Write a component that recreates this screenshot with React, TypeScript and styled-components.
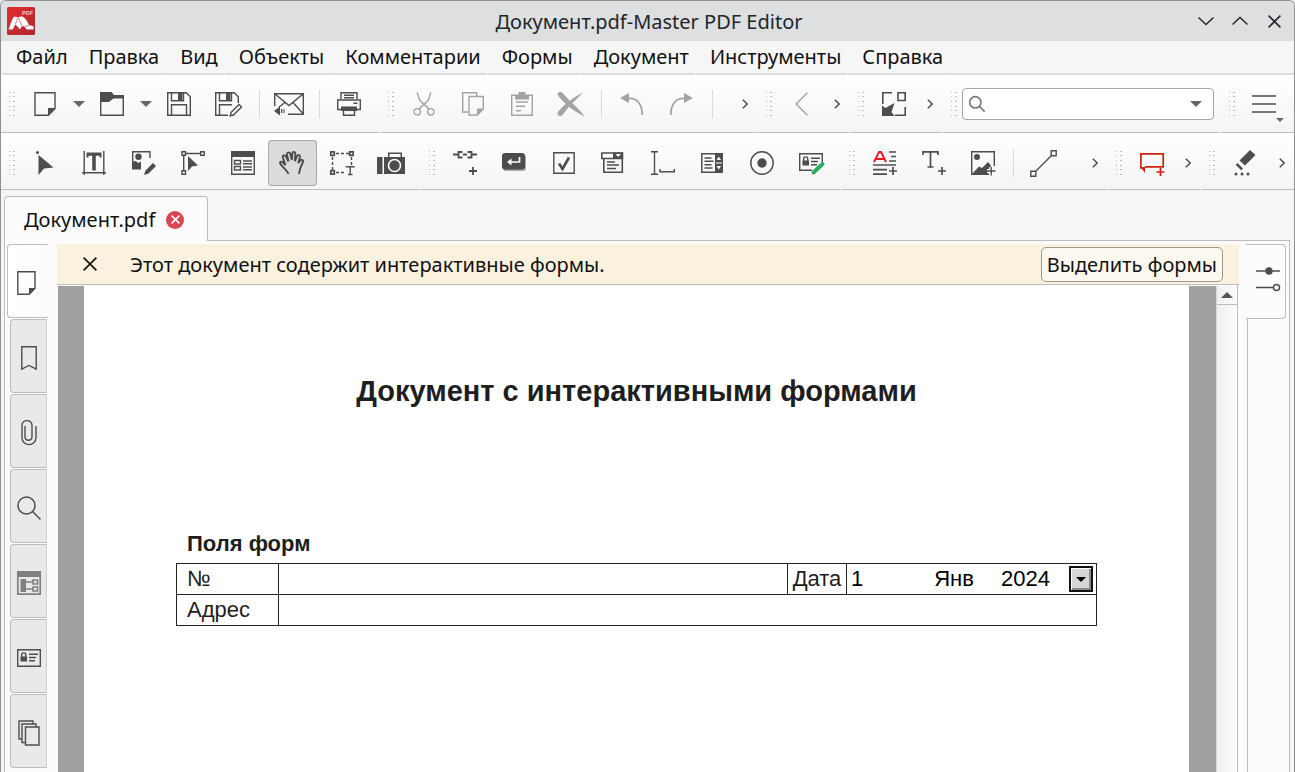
import React from "react";
import styled, { createGlobalStyle, css } from "styled-components";

const ink = "#4d4d4d";
const line = "#bdbdbd";
const ui = `"Noto Sans", "Liberation Sans", sans-serif`;
const doc = `"Liberation Sans", Arial, sans-serif`;

const Global = createGlobalStyle`
  * { box-sizing: border-box; }
  html, body, #root { height: 100%; }
  body { margin: 0; background: #ececec; font-family: ${ui}; font-size: 20px; color: #111; overflow: hidden; }
  button, input { font: inherit; color: inherit; margin: 0; }
  button { border: 0; background: none; padding: 0; }
  svg { display: block; flex: none; overflow: visible; }
`;

const Window = styled.div`
  height: 100%;
  display: flex;
  flex-direction: column;
  border: 1px solid #8e9091;
  border-bottom: 0;
  border-radius: 6px 6px 0 0;
  background: #f6f6f6;
  overflow: hidden;
`;

const TitleBar = styled.header`
  flex: none;
  height: 40px;
  display: grid;
  grid-template-columns: 1fr auto 1fr;
  align-items: center;
  background: #dedfe1;
  padding: 0 3px 0 6px;
`;

const Title = styled.h1`
  margin: 0;
  padding-top: 2px;
  font-size: 20px;
  font-weight: 400;
  line-height: 26px;
  color: #232629;
`;

const WindowButtons = styled.div`
  display: flex;
  justify-content: flex-end;
`;

const WindowButton = styled.button`
  width: 34px;
  height: 34px;
  display: grid;
  place-items: center;
  color: #232629;
`;

const MenuBar = styled.nav`
  flex: none;
  display: flex;
  height: 34px;
  padding-left: 1px;
  gap: 1px;
`;

const MenuItem = styled.button`
  padding: 0 6px 0 14px;
  line-height: 32px;
  border-bottom: 2px solid #dcdcdc;
`;

const MenuRest = styled.span`
  flex: 1;
  border-bottom: 2px solid #dcdcdc;
`;

const ToolRow = styled.div<{ $height: number }>`
  flex: none;
  display: flex;
  gap: 1px;
  height: ${(p) => p.$height}px;
  background: linear-gradient(#ffffff, #f4f4f4);
`;

const ToolGroup = styled.div<{ $width?: number; $end?: number; $top?: number }>`
  flex: ${(p) => (p.$width ? `0 0 ${p.$width}px` : "1 1 0")};
  min-width: 0;
  display: flex;
  align-items: center;
  padding-top: ${(p) => p.$top ?? 0}px;
  padding-right: ${(p) => p.$end ?? 0}px;
  border-bottom: 1px solid ${line};
`;

const Tool = styled.button<{ $active?: boolean; $muted?: boolean }>`
  position: relative;
  flex: 1 1 0;
  height: 46px;
  display: grid;
  place-items: center;
  border-radius: 4px;
  color: ${(p) => (p.$muted ? "#a3a3a3" : ink)};
  ${(p) =>
    p.$active &&
    css`
      background: #dcdcdc;
      box-shadow: inset 0 0 0 1px #a9a9a9;
    `}
`;

const Narrow = styled.button<{ $width: number }>`
  flex: 0 0 ${(p) => p.$width}px;
  height: 46px;
  display: grid;
  place-items: center;
  color: ${ink};
`;

const Divider = styled.span<{ $width: number }>`
  flex: 0 0 ${(p) => p.$width}px;
  height: 28px;
  background: linear-gradient(#d9d9d9, #d9d9d9) center / 1px 100% no-repeat;
`;

const Spacer = styled.span`
  flex: 0 0 15px;
`;

const GripBox = styled.span`
  flex: 0 0 19px;
  padding-left: 7px;
`;

const MenuMark = styled.span`
  position: absolute;
  right: 3px;
  bottom: 5px;
`;

const SearchBox = styled.label`
  flex: 1;
  min-width: 0;
  height: 32px;
  display: flex;
  align-items: center;
  gap: 6px;
  padding: 0 11px 0 6px;
  border: 1px solid #a8a8a8;
  border-radius: 4px;
  background: #fff;
  color: #777;
`;

const SearchInput = styled.input`
  flex: 1;
  min-width: 0;
  border: 0;
  outline: 0;
  background: none;
`;

const TabStrip = styled.div`
  flex: none;
  height: 51px;
  padding: 6px 0 0 3px;
  display: flex;
`;

const DocTab = styled.div`
  display: flex;
  align-items: center;
  gap: 11px;
  height: 45px;
  padding: 1px 23px 0 19px;
  border: 1px solid ${line};
  border-bottom: 0;
  border-radius: 4px 4px 0 0;
  background: #fcfcfc;
`;

const TabRest = styled.span`
  flex: 1;
  margin-right: 4px;
  border-bottom: 1px solid ${line};
`;

const CloseTab = styled.button`
  width: 18px;
  height: 18px;
  display: grid;
  place-items: center;
  border-radius: 50%;
  background: #da4453;
  color: #fff;
`;

const Pane = styled.div`
  flex: 1;
  min-height: 0;
  margin: 0 4px 0 3px;
  padding: 3px 3px 0 2px;
  display: flex;
  border: solid ${line};
  border-width: 0 1px;
  background: #fcfcfc;
`;

const SideTabs = styled.nav`
  flex: 0 0 41px;
  display: flex;
  flex-direction: column;
  gap: 1px;
`;

const SideTab = styled.button<{ $current?: boolean }>`
  flex: 0 0 74px;
  display: grid;
  place-items: center;
  padding-top: 4px;
  border: 1px solid ${line};
  border-radius: 4px 0 0 4px;
  color: ${ink};
  ${(p) =>
    p.$current
      ? css`
          padding-right: 3px;
          border-right: 0;
          background: linear-gradient(90deg, #ffffff, #fcfcfc);
        `
      : css`
          margin: 0 1px 0 3px;
          border-right-color: #cfcfcf;
          background: #e9e9e9;
        `}
`;

const Center = styled.main`
  flex: 1;
  min-width: 0;
  margin-left: 9px;
  display: flex;
  flex-direction: column;
`;

const Notice = styled.div`
  flex: none;
  height: 41px;
  display: flex;
  align-items: center;
  padding: 0 16px 0 26px;
  background: #faf2df;
  border-bottom: 1px solid ${line};
`;

const NoticeClose = styled.button`
  color: #111;
`;

const NoticeText = styled.p`
  flex: 1;
  margin: 0 0 0 33px;
`;

const NoticeAction = styled.button`
  height: 35px;
  padding: 0 5px;
  border: 1px solid #9c9890;
  border-radius: 5px;
  background: #fdf9f0;
  line-height: 33px;
`;

const Viewer = styled.div`
  flex: 1;
  min-height: 0;
  margin: 0 1px;
  padding-top: 1px;
  display: flex;
  border-right: 1px solid ${line};
`;

const Desk = styled.div`
  flex: 1;
  min-width: 0;
  padding: 0 27px 0 26px;
  background: #a0a0a0;
  display: flex;
  overflow: hidden;
`;

const Sheet = styled.article`
  flex: 1;
  padding: 88px 92px 0;
  background: #fff;
  font-family: ${doc};
  color: #1e1e1e;
`;

const SheetTitle = styled.h2`
  margin: 0;
  font-size: 29px;
  line-height: 34px;
  text-align: center;
`;

const SheetSection = styled.h3`
  margin: 123px 0 0 11px;
  font-size: 22px;
  line-height: 26px;
`;

const FormTable = styled.table`
  width: 100%;
  margin-top: 6px;
  border-collapse: collapse;
  table-layout: fixed;
  font-size: 22px;
  line-height: 28px;
  color: #1e1e1e;
`;

const Cell = styled.td<{ $label?: boolean }>`
  height: 31px;
  padding: 0 0 0 ${(p) => (p.$label ? 10 : 0)}px;
  border: 1px solid #222;
`;

const DateLabelCell = styled.td`
  padding: 0;
  border: 1px solid #222;
  text-align: center;
`;

const Field = styled.input`
  display: block;
  width: 100%;
  height: 28px;
  padding: 0 5px;
  border: 0;
  outline: 0;
  background: none;
`;

const DateField = styled.div`
  display: flex;
  align-items: center;
  height: 30px;
  padding-right: 3px;
  color: #000;
`;

const DatePart = styled.input<{ $width: number; $align?: string }>`
  flex: 0 0 ${(p) => p.$width}px;
  width: ${(p) => p.$width}px;
  padding: 0 4px;
  border: 0;
  outline: 0;
  background: none;
  text-align: ${(p) => p.$align ?? "left"};
`;

const DateOpen = styled.button`
  margin-left: auto;
  width: 24px;
  height: 26px;
  display: grid;
  place-items: center;
  border: 2px solid #111;
  background: #d6d6d6;
  box-shadow: inset 1px 1px 0 #fff, inset -2px -2px 0 #8a8a8a;
  color: #000;
`;

const ScrollBar = styled.div`
  flex: 0 0 21px;
  background: linear-gradient(90deg, #f0f0f0, #fcfcfc);
  border-left: 1px solid #d8d8d8;
`;

const ScrollUp = styled.button`
  width: 100%;
  height: 19px;
  display: grid;
  place-items: center;
  border-bottom: 1px solid ${line};
  color: ${ink};
`;

const RightDock = styled.aside`
  flex: 0 0 40px;
  margin-left: 7px;
  display: flex;
  flex-direction: column;
`;

const RightTab = styled.button`
  flex: 0 0 75px;
  display: grid;
  place-items: center;
  padding: 0 0 6px 5px;
  border: 1px solid ${line};
  border-left: 0;
  border-radius: 0 4px 4px 0;
  color: ${ink};
`;

const RightBody = styled.div`
  flex: 1;
  border-left: 1px solid ${line};
  margin-left: 1px;
`;

type IconProps = { w?: number; h?: number; sw?: number; children: React.ReactNode };

const Icon = ({ w = 24, h = 24, sw = 1.4, children }: IconProps) => (
  <svg width={w} height={h} viewBox={`0 0 ${w} ${h}`} fill="none" stroke="currentColor" strokeWidth={sw} aria-hidden="true">
    {children}
  </svg>
);

const solid = { fill: "currentColor", stroke: "none" };

const Grip = () => (
  <GripBox>
    <svg width="8" height="26" viewBox="0 0 8 26" fill="#bdbdbd" aria-hidden="true">
      {[0, 4, 9, 14, 18, 23].map((y) => (
        <React.Fragment key={y}>
          <rect x="1" y={y + 1} width="1" height="1" />
          <rect x="5" y={y + 1} width="2" height="1" />
        </React.Fragment>
      ))}
    </svg>
  </GripBox>
);

const DownTriangle = ({ w = 12, h = 6 }) => (
  <svg width={w} height={h} viewBox={`0 0 ${w} ${h}`} fill="#666" aria-hidden="true">
    <path d={`M0 0h${w}L${w / 2} ${h}z`} />
  </svg>
);

const DropDown = ({ label }: { label: string }) => (
  <Narrow $width={17} aria-label={label}>
    <DownTriangle />
  </Narrow>
);

const More = () => (
  <Narrow $width={24} aria-label="Ещё">
    <Icon w={6} h={10} sw={1.5}>
      <path d="M.8.7 5.2 5 .8 9.3" />
    </Icon>
  </Narrow>
);

const NewIcon = () => (
  <Icon>
    <path d="M2 .7h20v16l-6.600 6.600H2z" />
    <path {...solid} d="M22 16h-7v7.500z" />
  </Icon>
);
const OpenIcon = () => (
  <Icon>
    <path {...solid} d="M0 0h11.500l2.500 3h10v3.500H13.500L9 10H0z" />
    <path d="M.7 9v14.300h22.600V5" />
  </Icon>
);
const SaveIcon = () => (
  <Icon>
    <path d="M.7.7h18.500l4.100 4.100v18.500H.7zM4.500.7v8h12v-8M4.500 23.300V12.700h15v10.600" />
    <path {...solid} d="M11 1h4.500v7H11z" />
  </Icon>
);
const SaveAsIcon = () => (
  <Icon w={28}>
    <path d="M13 23.300H.7V.7h18.500l4.100 4.100V11M4.500.7v8h12v-8M4.500 23V12.700H17" />
    <path {...solid} d="M11 1h4.500v7H11z" />
    <path d="m16 20.500 8-8 2.500 2.500-8 8-3.300.8z" />
  </Icon>
);
const MailIcon = () => (
  <Icon w={30}>
    <path d="M.7 14V1.700h28.600v20.600H14M.7 1.700 15 13.500 29.300 1.700M11 10.500 5 15M19 10.500l10 11" />
    <path {...solid} d="m0 19 6-4.500v9zM7 17h1.300v4H7zM9.500 17h1v4h-1z" />
  </Icon>
);
const PrintIcon = () => (
  <Icon>
    <path d="M4 7V.8h16V7M7 3.200h10M7 5.700h10M4 17.500H.7V8h22.600v9.500H20M6.500 19v4.300h11V19" />
    <path {...solid} d="M4 14.500h16V19H4zM16.500 10.500h4v1.500h-4z" />
  </Icon>
);
const CutIcon = () => (
  <Icon w={22}>
    <path d="M4 .5 7 8.500l9 8.500M18 .5l-3 8L6 17" />
    <circle cx="4.200" cy="19.800" r="3.200" />
    <circle cx="17.800" cy="19.800" r="3.200" />
  </Icon>
);
const CopyIcon = () => (
  <Icon w={22}>
    <path d="M6 20H.7V.7h14V4M7 4.500h14.300v12.500l-6 6H7z" />
    <path {...solid} d="M21.500 16.500H15v7z" />
  </Icon>
);
const PasteIcon = () => (
  <Icon w={22}>
    <path d="M4.500 3.200H.7v20.100h20.600V3.200h-3.800M5 10h12M5 14.200h9M5 18.700h5" />
    <path {...solid} d="M4 2.500h3.500V0h7v2.500H18V7.500H4z" />
  </Icon>
);
const DeleteIcon = () => (
  <Icon w={28}>
    <path {...solid} d="M.5 2.500C.5-.3 4-.7 6 1.500c3.500 4 9.500 10 16 16l6 7.200C19 20.500 7 12.500.5 2.500zM26.500.3C19 7.500 11 15 6 22.500c-2.200 2.800-6 1.500-5.500-1.700C4 15.500 14 6.500 26.500.3z" />
  </Icon>
);
const UndoIcon = ({ flip }: { flip?: boolean }) => (
  <Icon w={24} h={22} sw={1.800}>
    <g transform={flip ? "matrix(-1 0 0 1 24 0)" : undefined}>
      <path d="M8 5.500c9-.5 14 5 14.300 16.500" />
      <path {...solid} d="M0 5 9 0v10z" />
    </g>
  </Icon>
);
const BackIcon = () => (
  <Icon w={13}>
    <path d="M12.500.7 1.200 12l11.300 11.300" />
  </Icon>
);
const FitIcon = () => (
  <Icon sw={1.600}>
    <path d="M.8 12V.8H10M23.200 15v8.200H13M16 .8h7.200V8.500H16z" />
    <path {...solid} d="M0 13.500 3.500 16 12.500 11 9.500 20l3 4H0z" />
  </Icon>
);
const SearchIcon = ({ size = 16 }) => (
  <svg width={size} height={size} viewBox="0 0 24 24" fill="none" stroke="currentColor" strokeWidth={size > 20 ? 1.500 : 2.400} aria-hidden="true">
    <circle cx="9.500" cy="9.500" r="8.500" />
    <path d="m15.500 15.500 8 8" />
  </svg>
);
const BurgerIcon = () => (
  <Icon h={18} sw={1.600}>
    <path d="M0 1h24M0 9h24M0 17h24" />
  </Icon>
);

const SelectIcon = () => (
  <Icon w={22}>
    <circle {...solid} cx="3.500" cy="1.500" r="1.500" />
    <path {...solid} d="M4.500 4v20l5.500-6.500 9.500-1z" />
  </Icon>
);
const TextIcon = () => (
  <Icon w={24}>
    <path d="M2.200 0v24M21.800 0v24M0 21.800h24" />
    <path {...solid} d="M4.500 1.500h15v5h-2V4.800h-3.700V19.500h-3.600V4.800H6.500v1.700h-2z" />
  </Icon>
);
const EditImageIcon = () => (
  <Icon>
    <path d="M18 7V.7H.7V17" />
    <circle {...solid} cx="6.500" cy="5.800" r="3.200" />
    <path {...solid} d="M0 12c3-3 4-2 6 0l3-1.500v8H0zM21 12l3 3-7.500 7.500-4.500 1.500 1.500-4.500z" />
  </Icon>
);
const EditPathIcon = () => (
  <Icon>
    <path d="M1 .8h3.500v3.500H1zM19.700.8h3.500v3.500h-3.500zM1 19.700h3.500v3.500H1zM4.500 2.500h15M2.700 4.500v15" />
    <path {...solid} d="M7 5v15l4-4.500 6-1z" />
  </Icon>
);
const FormIcon = () => (
  <Icon>
    <path d="M.7.7h22.600v22.600H.7zM3.500 9.500h6v3.500h-6zM3.500 15.500h6V19h-6zM12 10h9M12 12.700h9M12 16h9M12 18.700h9" />
    <path {...solid} d="M0 0h24v6H0z" />
  </Icon>
);
const HandIcon = () => (
  <Icon w={26} h={24} sw={1.900}>
    <path d="M9.500 23C8 19 3.500 16.500 1.300 12.800.3 11 2.500 9.800 4 11.500L6.500 14 3.800 6.500C3.200 4.500 6 3.500 7 5.500l2.500 5L8 3.500C7.600 1.500 10.500.6 11.300 2.600L12.800 9l.6-6.600c.3-2 3-1.800 3 .3L15.800 10l2.400-5c.9-1.800 3.300-1 2.800 1l-1.800 6 2.300-2.600c1.400-1.400 3.300 0 2.500 1.600C22.500 14 21 16 20 23" />
  </Icon>
);
const SelectTextIcon = () => (
  <Icon>
    <path d="M.8.8h3.500v3.500H.8zM19.700.8h3.500v3.500h-3.500zM.8 19.700h3.500v3.500H.8z" strokeWidth="1.700" />
    <path strokeDasharray="3 2" d="M6 2.500h13M2.500 6v13M21.500 6v8M6 21.500h9" />
    <path d="M16.500 16.500V15.700H24v.8M20.200 16v7.500M18 23.500h4.500" />
  </Icon>
);
const CameraIcon = () => (
  <Icon w={28} h={22}>
    <path {...solid} d="M0 5h5.500v17H0zM7 5h4V.5h14V5h3v17H7zM12.500 2v3h11V2z" fillRule="evenodd" />
    <circle cx="17.500" cy="13.500" r="6" stroke="#fff" strokeWidth="1.600" />
  </Icon>
);
const LinkIcon = () => (
  <Icon sw={1.800}>
    <path d="M0 3.500h5M19 3.500h5M9.500 1H5.500v5.500h4M14.500 1h4v5.500h-4M10 3.500h4M16 20h8M20 16v8" />
  </Icon>
);
const EnterIcon = () => (
  <Icon h={20}>
    <rect x="1" y="1.500" width="23" height="16.500" rx="3" fill="#a8a8a8" stroke="none" />
    <rect width="23" height="16.500" rx="3" {...solid} />
    <path d="M17.500 4v5H7" stroke="#fff" strokeWidth="1.700" />
    <path d="m5 9 4.500-3.500v7z" fill="#fff" stroke="none" />
  </Icon>
);
const CheckIcon = () => (
  <Icon w={22} h={22}>
    <path d="M.8.8h20.400v20.400H.8z" />
    <path d="m6 11.500 3.500 5.500L16 5.500" strokeWidth="2.600" />
  </Icon>
);
const ComboIcon = () => (
  <Icon h={22}>
    <path d="M2.800 6.500v13.700h18.500V6.500M.8 1h20.700v5.500H.8zM6 10h8M6 13h12M6 16.500h9" strokeWidth="1.600" />
    <path {...solid} d="M12 .5h10v6.300H12z" />
    <path d="m14.500 2 2.700 3 2.700-3z" fill="#fff" stroke="none" />
  </Icon>
);
const InputIcon = () => (
  <Icon>
    <path d="M0 .8h7M3.500.8v22.400M0 23.200h7M9 18v2.800h14.300V18" />
  </Icon>
);
const ListIcon = () => (
  <Icon w={22} h={20} sw={1.500}>
    <path d="M.8.8h20.400v18.400H.8zM3.500 5h7M3.500 8.300h9M3.500 11.700h7M3.500 15h8" />
    <path {...solid} d="M14 .5h7.500v19H14z" />
    <path d="M15.500 7h4.500l-2.200-3.500zM15.500 13h4.500l-2.200 3.500zM15 9.500h6v1h-6z" fill="#fff" stroke="none" />
  </Icon>
);
const RadioIcon = () => (
  <Icon>
    <circle cx="12" cy="12" r="11.200" />
    <circle {...solid} cx="12" cy="12" r="4.700" />
  </Icon>
);
const SignIcon = ({ pen }: { pen?: boolean }) => (
  <Icon h={pen ? 20 : 18} w={24}>
    <path d={pen ? "M13 17.200H.7V.7h22.600V10" : "M.7.7h22.600v16.600H.7z"} />
    <path {...solid} d="M3.500 7.500H10v5H3.500z" />
    <path d="M4.700 8V5.500c0-2.200 4-2.200 4 0V8M12 5.200h9M12 8.500h7M12 11.800h6" />
    {pen && <path d="m14.500 19.500 9-8.500" stroke="#27ae60" strokeWidth="4" strokeLinecap="round" />}
  </Icon>
);
const EditTextIcon = () => (
  <Icon sw={1.700}>
    <path d="m1 11 5-10h2l5 10M3 8h8" stroke="#f0141e" strokeWidth="1.800" />
    <path d="M16 1h7M18 5.500h5M16 10h7M0 14h23M0 18.700h14M0 23.200h14M16 20h8M20 16v8" />
  </Icon>
);
const AddTextIcon = () => (
  <Icon sw={1.700}>
    <path d="M1 4V.9h15V4M8.500 1v15M5.500 16h6M16 20h8M20 16v8" />
  </Icon>
);
const AddImageIcon = () => (
  <Icon>
    <path d="M18 23.300H.7V.7h22.600V15" />
    <circle {...solid} cx="6" cy="6" r="3" />
    <path {...solid} d="m1 23 7-7.500 3 1.500 6-6 3 3.500-3 8.500z" />
    <path d="M16 20h8.500M20.200 16v8.500" stroke="#fbfbfb" strokeWidth="4" />
    <path d="M16 20h8.500M20.200 16v8.500" />
  </Icon>
);
const LineIcon = () => (
  <Icon w={27} h={27}>
    <path d="M.8 21.200h5v5h-5zM21.200.8h5v5h-5zM5.500 21.500l16-16" />
  </Icon>
);
const NoteIcon = () => (
  <Icon w={23} h={22} sw={1.700}>
    <g stroke="#d0210f">
      <path d="M2 16H.9V1.800h22.300v13H5" />
      <path d="M.5 15h4.500v6z" fill="#d0210f" stroke="none" />
      <path d="M16.500 20h8M20.500 16v8" />
    </g>
  </Icon>
);
const MarkerIcon = () => (
  <Icon w={22} h={26}>
    <path {...solid} d="M16 0l5.500 5L11 15.500 5.500 10.500zM3.500 13l5.500 5.500-1.800 1.800-5.500-5.500z" />
    <circle {...solid} cx="2" cy="24" r="1.500" />
    <circle {...solid} cx="8" cy="24" r="1.500" />
    <circle {...solid} cx="14" cy="24" r="1.500" />
  </Icon>
);
const BookmarkIcon = () => (
  <Icon w={16}>
    <path d="M.8.8h14.400v22.400L8 19.500.8 23.200z" />
  </Icon>
);
const PageIcon = () => (
  <Icon w={19}>
    <path d="M.8.8h17.200v16.500l-6 6H.8z" />
    <path {...solid} d="M18.500 17H12v6.500h1z" />
  </Icon>
);
const ClipIcon = () => (
  <Icon w={16} h={26}>
    <path d="M4 6v10.500c0 5 7 5 7 0V5.500c0-6.500-10-6.500-10 0v12c0 9.500 14 9.500 14 0V6" />
  </Icon>
);
const StructureIcon = () => (
  <Icon>
    <g stroke="#808080">
      <path d="M.8.8h22.400v22.400H.8zM16 9h4.500v4H16zM16 16h4.500v4H16zM9 11h7M9 18h7" strokeWidth="1.700" />
      <path fill="#808080" stroke="none" d="M0 0h24v6H0zM3.500 8H9v13H3.500z" />
    </g>
  </Icon>
);
const LayersIcon = () => (
  <Icon w={22} h={26}>
    <path d="M4 19H1V1h14v3M7 22.500H4V4h14v3M7.500 7H21v18H7.500z" />
  </Icon>
);
const SlidersIcon = () => (
  <Icon h={24} sw={1.500}>
    <path d="M0 4h24M0 20.500h17" />
    <circle {...solid} cx="13" cy="4" r="3.700" />
    <circle cx="20.500" cy="20.500" r="3" />
  </Icon>
);
const Cross = ({ size }: { size: number }) => (
  <Icon w={size} h={size} sw={1.600}>
    <path d={`M.6.6 ${size - 0.6} ${size - 0.6}M${size - 0.6} .6.6 ${size - 0.6}`} />
  </Icon>
);

const Logo = () => (
  <svg width="28" height="28" viewBox="0 0 28 28" role="img" aria-label="Master PDF Editor">
    <defs>
      <linearGradient id="logo" x1="0" y1="0" x2="1" y2="1">
        <stop offset="0" stopColor="#ea2a2c" />
        <stop offset="1" stopColor="#a92a31" />
      </linearGradient>
    </defs>
    <rect width="28" height="28" rx="1.500" fill="url(#logo)" />
    <text x="15" y="7.500" fontFamily={doc} fontWeight="700" fontSize="5.500" fill="#f6c9c9">PDF</text>
    <path fill="#fff" d="M1.500 22.500C3 18.500 4.500 13 7 9.500l4 .7 4-.9c3 1.700 5.500 4.700 7 8.700l4.500 1.200v3.300h-7l-2.500-3.500-2.500.8-1.500 2.700-4.500-5L7.500 19l-1.700 3.500z" />
    <path stroke="#cf2a2e" strokeWidth=".6" fill="none" d="m11.500 10.500 3.500 9M22.500 18l-4.500 1.500M11 10.500 8.500 17" />
  </svg>
);

const menus = ["Файл", "Правка", "Вид", "Объекты", "Комментарии", "Формы", "Документ", "Инструменты", "Справка"];

export default function App() {
  return (
    <>
      <Global />
      <Window>
        <TitleBar>
          <Logo />
          <Title>Документ.pdf-Master PDF Editor</Title>
          <WindowButtons>
            <WindowButton aria-label="Свернуть">
              <Icon w={16} h={8}><path d="M.5.5 8 7.500 15.500.5" /></Icon>
            </WindowButton>
            <WindowButton aria-label="Развернуть">
              <Icon w={16} h={8}><path d="M.5 7.500 8 .5l7.500 7" /></Icon>
            </WindowButton>
            <WindowButton aria-label="Закрыть"><Cross size={13} /></WindowButton>
          </WindowButtons>
        </TitleBar>

        <MenuBar>
          {menus.map((name) => <MenuItem key={name}>{name}</MenuItem>)}
          <MenuRest />
        </MenuBar>

        <ToolRow $height={58}>
          <ToolGroup $width={378} $end={5}>
            <Grip />
            <Tool aria-label="Создать"><NewIcon /></Tool>
            <DropDown label="Варианты создания" />
            <Tool aria-label="Открыть"><OpenIcon /></Tool>
            <DropDown label="Недавние файлы" />
            <Tool aria-label="Сохранить"><SaveIcon /></Tool>
            <Tool aria-label="Сохранить как"><SaveAsIcon /></Tool>
            <Divider $width={10} />
            <Tool aria-label="Отправить"><MailIcon /></Tool>
            <Divider $width={10} />
            <Tool aria-label="Печать"><PrintIcon /></Tool>
          </ToolGroup>
          <ToolGroup $width={377}>
            <Grip />
            <Tool $muted aria-label="Вырезать"><CutIcon /></Tool>
            <Tool $muted aria-label="Копировать"><CopyIcon /></Tool>
            <Tool $muted aria-label="Вставить"><PasteIcon /></Tool>
            <Tool $muted aria-label="Удалить"><DeleteIcon /></Tool>
            <Divider $width={12} />
            <Tool $muted aria-label="Отменить"><UndoIcon /></Tool>
            <Tool $muted aria-label="Повторить"><UndoIcon flip /></Tool>
            <Divider $width={12} />
            <Spacer />
            <More />
          </ToolGroup>
          <ToolGroup $width={91}>
            <Grip />
            <Tool $muted aria-label="Назад"><BackIcon /></Tool>
            <More />
          </ToolGroup>
          <ToolGroup $width={92}>
            <Grip />
            <Tool aria-label="По размеру"><FitIcon /></Tool>
            <More />
          </ToolGroup>
          <ToolGroup $end={6}>
            <Grip />
            <SearchBox>
              <SearchIcon />
              <SearchInput type="text" aria-label="Поиск" />
              <DownTriangle />
            </SearchBox>
          </ToolGroup>
          <ToolGroup $width={73} $end={7}>
            <Grip />
            <Tool aria-label="Меню">
              <BurgerIcon />
              <MenuMark><DownTriangle w={8} h={4} /></MenuMark>
            </Tool>
          </ToolGroup>
        </ToolRow>

        <ToolRow $height={57}>
          <ToolGroup $width={419} $end={4} $top={4}>
            <Grip />
            <Tool aria-label="Выделение"><SelectIcon /></Tool>
            <Tool aria-label="Правка текста"><TextIcon /></Tool>
            <Tool aria-label="Правка изображений"><EditImageIcon /></Tool>
            <Tool aria-label="Правка контуров"><EditPathIcon /></Tool>
            <Tool aria-label="Правка форм"><FormIcon /></Tool>
            <Tool $active aria-label="Рука" aria-pressed="true"><HandIcon /></Tool>
            <Tool aria-label="Выделить текст"><SelectTextIcon /></Tool>
            <Tool aria-label="Снимок"><CameraIcon /></Tool>
          </ToolGroup>
          <ToolGroup $width={419} $end={4} $top={4}>
            <Grip />
            <Tool aria-label="Ссылка"><LinkIcon /></Tool>
            <Tool aria-label="Кнопка"><EnterIcon /></Tool>
            <Tool aria-label="Флажок"><CheckIcon /></Tool>
            <Tool aria-label="Выпадающий список"><ComboIcon /></Tool>
            <Tool aria-label="Текстовое поле"><InputIcon /></Tool>
            <Tool aria-label="Список"><ListIcon /></Tool>
            <Tool aria-label="Переключатель"><RadioIcon /></Tool>
            <Tool aria-label="Подпись"><SignIcon pen /></Tool>
          </ToolGroup>
          <ToolGroup $width={266} $top={4}>
            <Grip />
            <Tool aria-label="Изменить текст"><EditTextIcon /></Tool>
            <Tool aria-label="Добавить текст"><AddTextIcon /></Tool>
            <Tool aria-label="Добавить изображение"><AddImageIcon /></Tool>
            <Divider $width={12} />
            <Tool aria-label="Линия"><LineIcon /></Tool>
            <Spacer />
            <More />
          </ToolGroup>
          <ToolGroup $width={92} $top={4}>
            <Grip />
            <Tool aria-label="Заметка"><NoteIcon /></Tool>
            <More />
          </ToolGroup>
          <ToolGroup $top={4}>
            <Grip />
            <Tool aria-label="Маркер"><MarkerIcon /></Tool>
            <More />
          </ToolGroup>
        </ToolRow>

        <TabStrip>
          <DocTab>
            Документ.pdf
            <CloseTab aria-label="Закрыть вкладку"><Cross size={9} /></CloseTab>
          </DocTab>
          <TabRest />
        </TabStrip>

        <Pane>
          <SideTabs>
            <SideTab $current aria-label="Страницы"><PageIcon /></SideTab>
            <SideTab aria-label="Закладки"><BookmarkIcon /></SideTab>
            <SideTab aria-label="Вложения"><ClipIcon /></SideTab>
            <SideTab aria-label="Поиск"><SearchIcon size={24} /></SideTab>
            <SideTab aria-label="Поля форм"><StructureIcon /></SideTab>
            <SideTab aria-label="Подписи"><SignIcon /></SideTab>
            <SideTab aria-label="Слои"><LayersIcon /></SideTab>
          </SideTabs>

          <Center>
            <Notice>
              <NoticeClose aria-label="Скрыть"><Cross size={14} /></NoticeClose>
              <NoticeText>Этот документ содержит интерактивные формы.</NoticeText>
              <NoticeAction>Выделить формы</NoticeAction>
            </Notice>
            <Viewer>
              <Desk>
                <Sheet>
                  <SheetTitle>Документ с интерактивными формами</SheetTitle>
                  <SheetSection>Поля форм</SheetSection>
                  <FormTable>
                    <colgroup>
                      <col style={{ width: 102 }} />
                      <col />
                      <col style={{ width: 59 }} />
                      <col style={{ width: 250 }} />
                    </colgroup>
                    <tbody>
                      <tr>
                        <Cell $label><label htmlFor="number">№</label></Cell>
                        <Cell><Field id="number" type="text" /></Cell>
                        <DateLabelCell><label htmlFor="day">Дата</label></DateLabelCell>
                        <Cell>
                          <DateField>
                            <DatePart id="day" $width={64} defaultValue="1" />
                            <DatePart $width={86} $align="center" aria-label="Месяц" defaultValue="Янв" />
                            <DatePart $width={64} aria-label="Год" defaultValue="2024" />
                            <DateOpen aria-label="Открыть календарь">
                              <svg width="10" height="5" viewBox="0 0 10 5" aria-hidden="true"><path d="M0 0h10L5 5z" /></svg>
                            </DateOpen>
                          </DateField>
                        </Cell>
                      </tr>
                      <tr>
                        <Cell $label><label htmlFor="address">Адрес</label></Cell>
                        <Cell colSpan={3}><Field id="address" type="text" /></Cell>
                      </tr>
                    </tbody>
                  </FormTable>
                </Sheet>
              </Desk>
              <ScrollBar>
                <ScrollUp aria-label="Прокрутить вверх">
                  <svg width="12" height="6" viewBox="0 0 12 6" fill="#555" aria-hidden="true"><path d="M0 6h12L6 0z" /></svg>
                </ScrollUp>
              </ScrollBar>
            </Viewer>
          </Center>

          <RightDock>
            <RightTab aria-label="Свойства"><SlidersIcon /></RightTab>
            <RightBody />
          </RightDock>
        </Pane>
      </Window>
    </>
  );
}
